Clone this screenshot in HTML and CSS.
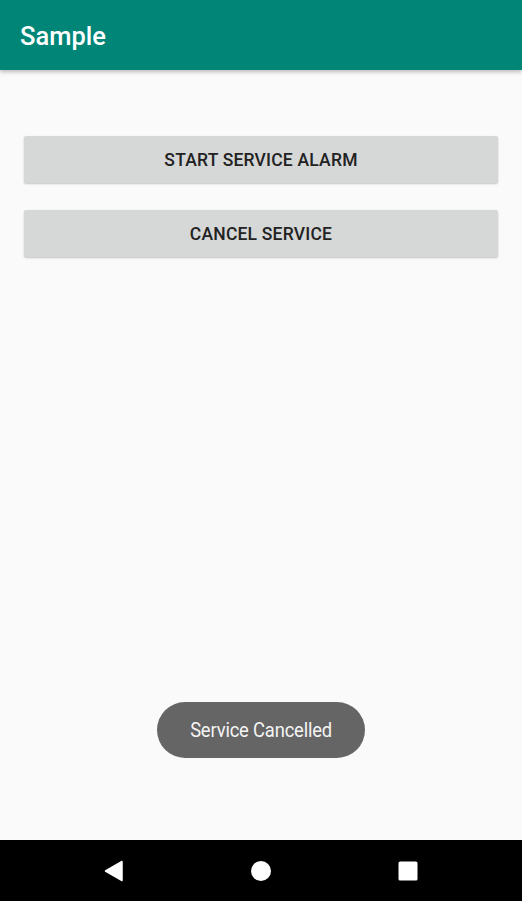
FILE: index.html
```html
<!DOCTYPE html>
<html>
<head>
<meta charset="utf-8">
<link rel="stylesheet" href="styles.css">
</head>
<body>
<div class="screen">
  <header class="appbar"><span class="title">Sample</span></header>
  <main class="content">
    <button class="btn">START SERVICE ALARM</button>
    <button class="btn">CANCEL SERVICE</button>
    <div class="spacer"></div>
    <div class="toast-row"><div class="toast"><span class="toast-text">Service Cancelled</span></div></div>
  </main>
  <nav class="navbar">
    <svg class="nav-icon" width="22" height="22" viewBox="0 0 22 22"><path d="M19 1.5 L19 20.5 L2.5 11 Z" fill="#fff" stroke="#fff" stroke-width="1.5" stroke-linejoin="round"/></svg>
    <svg class="nav-icon" width="22" height="22" viewBox="0 0 22 22"><circle cx="11" cy="11" r="10" fill="#fff"/></svg>
    <svg class="nav-icon" width="22" height="22" viewBox="0 0 22 22"><rect x="1.5" y="1.5" width="19" height="19" rx="1.5" fill="#fff"/></svg>
  </nav>
</div>
</body>
</html>
```
FILE: styles.css
```css
* { box-sizing: border-box; }
html, body { margin: 0; padding: 0; }
body { background: #fafafa; font-family: Roboto, "Noto Sans", sans-serif; }
.screen { width: 522px; height: 901px; display: flex; flex-direction: column; }
.appbar {
  height: 70px; background: #008577; display: flex; align-items: center;
  padding: 2px 0 0 20px; box-shadow: 0 2px 4px rgba(0,0,0,0.25); position: relative; z-index: 1;
}
.title { color: #fff; font-size: 25.5px; font-weight: 500; }
.content { flex: 1; display: flex; flex-direction: column; padding: 66px 24px 0 24px; gap: 27px; }
.btn {
  height: 47px; width: 474px; border: none; border-radius: 2px; background: #d6d7d7;
  box-shadow: 0 1px 2px rgba(0,0,0,0.22); font-family: Roboto, sans-serif; font-weight: 500;
  font-size: 17.5px; color: #222; letter-spacing: 0.2px; padding: 0;
}
.spacer { flex: 1; }
.toast-row { display: flex; justify-content: center; margin: -27px 0 82px 0; }
.toast {
  height: 56px; width: 208px; border-radius: 28px; background: #656565; color: #f4f4f4;
  font-size: 21px; display: flex; align-items: center; justify-content: center;
}
.toast-text { display: inline-block; white-space: nowrap; transform: scaleX(0.875); letter-spacing: -0.2px; }
.navbar { height: 61px; background: #000; display: flex; align-items: center; justify-content: space-between; padding: 0 103px 0 103px; }
.nav-icon { display: block; }
```
